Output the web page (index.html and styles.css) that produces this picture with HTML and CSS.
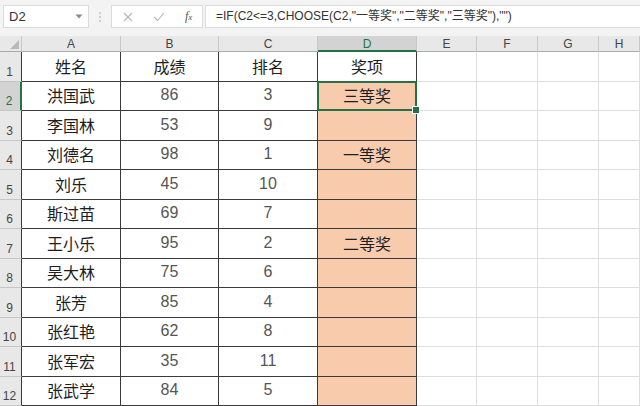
FILE: index.html
```html
<!DOCTYPE html>
<html>
<head>
<meta charset="utf-8">
<link rel="stylesheet" href="styles.css">
</head>
<body>
<div class="toolbar">
  <div class="namebox"><span>D2</span><svg class="dd" width="8" height="5" viewBox="0 0 8 5"><path d="M0.5 0.5 L7.5 0.5 L4 4.5 Z" fill="#8a8a8a"/></svg></div>
  <svg class="dots" width="4" height="12" viewBox="0 0 4 12"><circle cx="2" cy="2" r="1" fill="#c2c2c2"/><circle cx="2" cy="6" r="1" fill="#c2c2c2"/><circle cx="2" cy="10" r="1" fill="#c2c2c2"/></svg>
  <div class="fxbox">
    <svg width="10" height="10" viewBox="0 0 10 10"><path d="M1 1 L9 9 M9 1 L1 9" stroke="#b4b4b4" stroke-width="1.1" fill="none"/></svg>
    <svg width="12" height="10" viewBox="0 0 12 10"><path d="M1 5 L4.5 8.5 L11 1" stroke="#b4b4b4" stroke-width="1.1" fill="none"/></svg>
    <span class="fx">f<small>x</small></span>
  </div>
  <div class="formula">=IF(C2&lt;=3,CHOOSE(C2,"一等奖","二等奖","三等奖"),"")</div>
</div>
<div class="sheet">
  <div class="row">
    <div class="corner"><svg width="9" height="9" viewBox="0 0 9 9"><path d="M9 0 L9 9 L0 9 Z" fill="#b9b9b9"/></svg></div>
    <div class="ch">A</div><div class="ch">B</div><div class="ch">C</div><div class="ch ch-sel">D</div><div class="ch">E</div><div class="ch">F</div><div class="ch">G</div><div class="ch">H</div>
  </div>
  <div class="row">
    <div class="rh">1</div><div class="c t">姓名</div><div class="c t">成绩</div><div class="c t">排名</div><div class="c t">奖项</div><div class="c"></div><div class="c"></div><div class="c"></div><div class="c"></div>
  </div>
  <div class="row">
    <div class="rh rh-sel">2</div><div class="c t">洪国武</div><div class="c t num">86</div><div class="c t num">3</div><div class="c t fill sel">三等奖</div><div class="c"></div><div class="c"></div><div class="c"></div><div class="c"></div>
  </div>
  <div class="row">
    <div class="rh">3</div><div class="c t">李国林</div><div class="c t num">53</div><div class="c t num">9</div><div class="c t fill"></div><div class="c"></div><div class="c"></div><div class="c"></div><div class="c"></div>
  </div>
  <div class="row">
    <div class="rh">4</div><div class="c t">刘德名</div><div class="c t num">98</div><div class="c t num">1</div><div class="c t fill">一等奖</div><div class="c"></div><div class="c"></div><div class="c"></div><div class="c"></div>
  </div>
  <div class="row">
    <div class="rh">5</div><div class="c t">刘乐</div><div class="c t num">45</div><div class="c t num">10</div><div class="c t fill"></div><div class="c"></div><div class="c"></div><div class="c"></div><div class="c"></div>
  </div>
  <div class="row">
    <div class="rh">6</div><div class="c t">斯过苗</div><div class="c t num">69</div><div class="c t num">7</div><div class="c t fill"></div><div class="c"></div><div class="c"></div><div class="c"></div><div class="c"></div>
  </div>
  <div class="row">
    <div class="rh">7</div><div class="c t">王小乐</div><div class="c t num">95</div><div class="c t num">2</div><div class="c t fill">二等奖</div><div class="c"></div><div class="c"></div><div class="c"></div><div class="c"></div>
  </div>
  <div class="row">
    <div class="rh">8</div><div class="c t">吴大林</div><div class="c t num">75</div><div class="c t num">6</div><div class="c t fill"></div><div class="c"></div><div class="c"></div><div class="c"></div><div class="c"></div>
  </div>
  <div class="row">
    <div class="rh">9</div><div class="c t">张芳</div><div class="c t num">85</div><div class="c t num">4</div><div class="c t fill"></div><div class="c"></div><div class="c"></div><div class="c"></div><div class="c"></div>
  </div>
  <div class="row">
    <div class="rh">10</div><div class="c t">张红艳</div><div class="c t num">62</div><div class="c t num">8</div><div class="c t fill"></div><div class="c"></div><div class="c"></div><div class="c"></div><div class="c"></div>
  </div>
  <div class="row">
    <div class="rh">11</div><div class="c t">张军宏</div><div class="c t num">35</div><div class="c t num">11</div><div class="c t fill"></div><div class="c"></div><div class="c"></div><div class="c"></div><div class="c"></div>
  </div>
  <div class="row">
    <div class="rh">12</div><div class="c t">张武学</div><div class="c t num">84</div><div class="c t num">5</div><div class="c t fill"></div><div class="c"></div><div class="c"></div><div class="c"></div><div class="c"></div>
  </div>
</div>
</body>
</html>
```
FILE: styles.css
```css
* { box-sizing: border-box; }
html, body { margin: 0; padding: 0; }
body {
  width: 640px;
  height: 406px;
  overflow: hidden;
  background: #ffffff;
  font-family: "Liberation Sans", "Noto Sans CJK SC", sans-serif;
  color: #222;
}
.toolbar {
  height: 36px;
  background: #f3f3f3;
  display: flex;
  align-items: flex-start;
  padding-top: 5px;
  padding-left: 3px;
}
.namebox {
  width: 86px;
  height: 23px;
  background: #fff;
  border: 1px solid #dcdcdc;
  display: flex;
  align-items: center;
  justify-content: space-between;
  padding: 0 5px 0 5px;
  font-size: 13px;
  color: #333;
}
.dots { margin: 6px 9px 0 9px; }
.fxbox {
  width: 92px;
  height: 23px;
  background: #fff;
  border: 1px solid #dcdcdc;
  display: flex;
  align-items: center;
  gap: 20px;
  padding-left: 11px;
}
.fx {
  font-family: "Liberation Serif", serif;
  font-style: italic;
  font-size: 12px;
  color: #555;
}
.fx small { font-size: 9px; }
.formula {
  flex: 1;
  height: 23px;
  margin-left: 2px;
  background: #fff;
  border: 1px solid #dcdcdc;
  border-right: none;
  padding-left: 10px;
  font-size: 12px;
  line-height: 21px;
  color: #333;
  white-space: nowrap;
  overflow: hidden;
}
.sheet {
  display: grid;
  grid-template-columns: 22px 99px 98px 99px 99px 60px 61px 61px 1fr;
  grid-template-rows: 16px repeat(12, 29.5px);
}
.row { display: contents; }
.corner {
  background: #e8e8e8;
  border-right: 1px solid #c8c8c8;
  border-bottom: 1px solid #ababab;
  display: flex;
  align-items: flex-end;
  justify-content: flex-end;
  padding: 0 2px 2px 0;
}
.ch {
  background: #e8e8e8;
  border-right: 1px solid #c8c8c8;
  border-bottom: 1px solid #ababab;
  font-size: 12px;
  color: #444;
  text-align: center;
  line-height: 16px;
}
.ch-sel {
  background: #d3d3d3;
  color: #217346;
  border-bottom: 2px solid #217346;
}
.rh {
  background: #e8e8e8;
  border-bottom: 1px solid #c6c6c6;
  border-right: 1px solid #3a3a3a;
  font-size: 12px;
  color: #444;
  display: flex;
  align-items: flex-end;
  justify-content: center;
  padding: 0 2px 2px 0;
}
.rh-sel {
  background: #d3d3d3;
  color: #217346;
  border-right: 2px solid #217346;
}
.c {
  border-right: 1px solid #dedede;
  border-bottom: 1px solid #dedede;
  display: flex;
  align-items: center;
  justify-content: center;
  font-size: 16px;
  font-family: "Noto Sans CJK SC", "Liberation Sans", sans-serif;
  color: #1e1e1e;
  padding-bottom: 1px;
}
.c.t {
  border-right: 1px solid #3a3a3a;
  border-bottom: 1px solid #3a3a3a;
}
.c.num {
  font-family: "Liberation Sans", sans-serif;
  font-size: 16px;
  color: #555;
}
.fill { background: #f8cbad; }
.sel { position: relative; }
.sel::after {
  content: "";
  position: absolute;
  left: -1px;
  top: -1px;
  right: -1px;
  bottom: -1px;
  border: 2px solid #217346;
}
.sel::before {
  content: "";
  position: absolute;
  right: -4px;
  bottom: -4px;
  width: 6px;
  height: 6px;
  background: #217346;
  border: 1px solid #fff;
  z-index: 2;
}
```
